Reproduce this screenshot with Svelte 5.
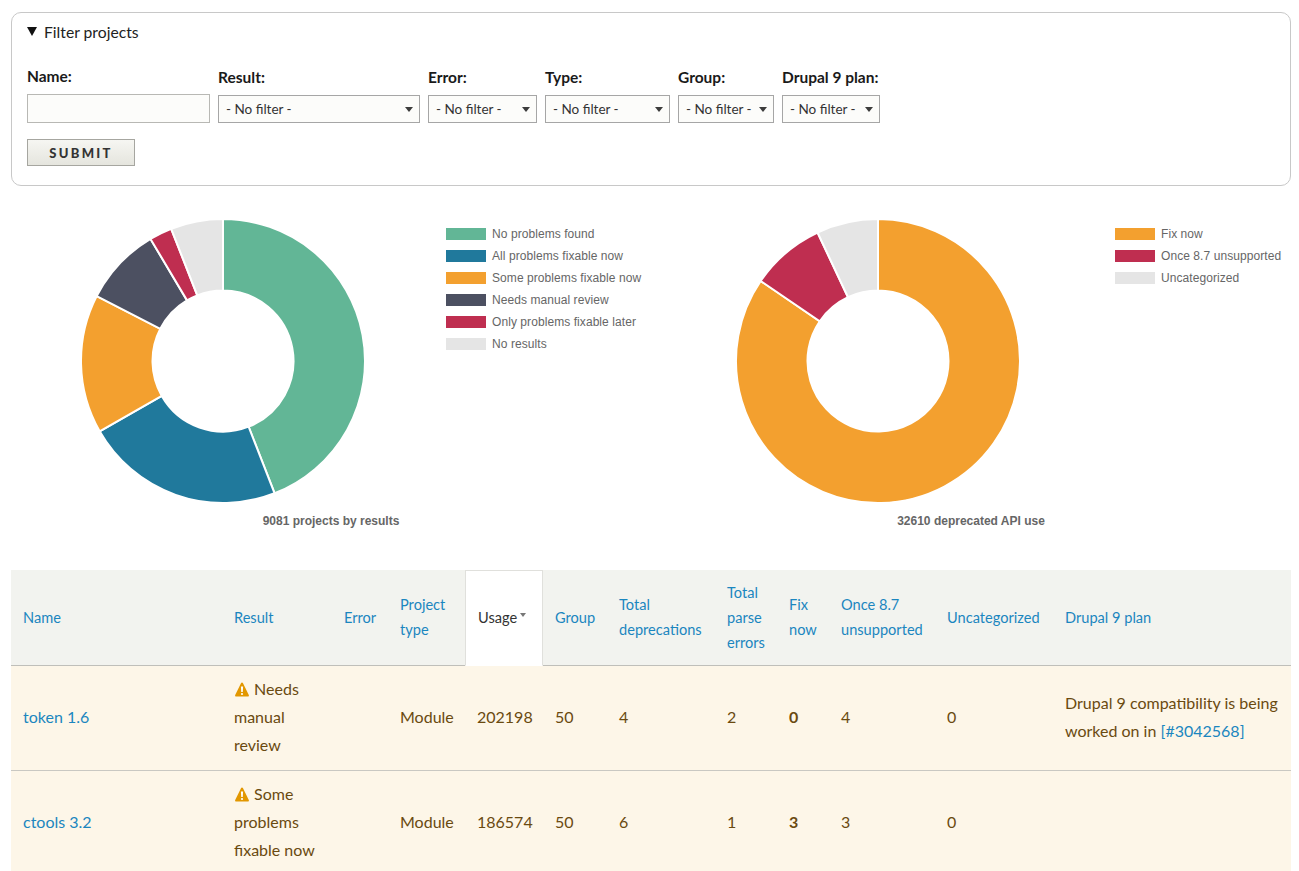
<script>
  function pt(r, deg) {
    const a = (deg * Math.PI) / 180;
    return `${(r * Math.sin(a)).toFixed(2)} ${(-r * Math.cos(a)).toFixed(2)}`;
  }
  function arc(from, to) {
    const R = 142, r = 70.5, large = to - from > 180 ? 1 : 0;
    return `M${pt(R, from)}A${R} ${R} 0 ${large} 1 ${pt(R, to)}L${pt(r, to)}A${r} ${r} 0 ${large} 0 ${pt(r, from)}Z`;
  }
  const green = '#62b696', blue = '#20799c', orange = '#f3a02f', slate = '#4c5061', red = '#bf2e50', grey = '#e5e5e5';
  const charts = [
    {
      cls: 'results',
      title: '9081 projects by results',
      segs: [
        { label: 'No problems found', color: green, end: 158.7 },
        { label: 'All problems fixable now', color: blue, end: 240.3 },
        { label: 'Some problems fixable now', color: orange, end: 297.2 },
        { label: 'Needs manual review', color: slate, end: 329.3 },
        { label: 'Only problems fixable later', color: red, end: 338.6 },
        { label: 'No results', color: grey, end: 360 }
      ]
    },
    {
      cls: 'api',
      title: '32610 deprecated API use',
      segs: [
        { label: 'Fix now', color: orange, end: 304.3 },
        { label: 'Once 8.7 unsupported', color: red, end: 334.8 },
        { label: 'Uncategorized', color: grey, end: 360 }
      ]
    }
  ];
  const filters = [
    { label: 'Result:', w: 'w202' },
    { label: 'Error:', w: 'w109' },
    { label: 'Type:', w: 'w125' },
    { label: 'Group:', w: 'w96' },
    { label: 'Drupal 9 plan:', w: 'w98' }
  ];
  const cols = [211, 110, 56, 77, 78, 64, 108, 62, 52, 106, 118, 238];
  const rows = [
    { name: 'token 1.6', result: 'Needs manual review', usage: 202198, dep: 4, parse: 2, fix: 0, once: 4, plan: true },
    { name: 'ctools 3.2', result: 'Some problems fixable now', usage: 186574, dep: 6, parse: 1, fix: 3, once: 3, plan: false }
  ];
</script>

<div class="page">
  <details class="filter" open>
    <summary><span class="tri"></span>Filter projects</summary>
    <form class="fields" onsubmit={(e) => e.preventDefault()}>
      <div class="row">
        <div class="field">
          <label for="f-name">Name:</label>
          <input id="f-name" type="text" />
        </div>
        {#each filters as f, i}
          <div class="field">
            <label for={'f-' + i}>{f.label}</label>
            <div class="selwrap {f.w}">
              <select id={'f-' + i}><option>- No filter -</option></select>
              <span class="arrow"></span>
            </div>
          </div>
        {/each}
      </div>
      <button type="submit">SUBMIT</button>
    </form>
  </details>

  <div class="charts">
    {#each charts as c}
      <figure class="chart {c.cls}">
        <div class="plot">
          <svg class="donut" width="286" height="286" viewBox="-143 -143 286 286" aria-hidden="true">
            {#each c.segs as s, i}
              <path d={arc(i ? c.segs[i - 1].end : 0, s.end)} fill={s.color} stroke="#fff" stroke-width="2" />
            {/each}
          </svg>
          <ul class="legend">
            {#each c.segs as s}
              <li><span class="swatch" style:background={s.color}></span>{s.label}</li>
            {/each}
          </ul>
        </div>
        <figcaption>{c.title}</figcaption>
      </figure>
    {/each}
  </div>

  <table>
    <colgroup>
      {#each cols as w}<col style:width="{w}px" />{/each}
    </colgroup>
    <thead>
      <tr>
        <th><a href="#name">Name</a></th>
        <th><a href="#result">Result</a></th>
        <th><a href="#error">Error</a></th>
        <th><a href="#type">Project type</a></th>
        <th class="active">Usage<span class="sort"></span></th>
        <th><a href="#group">Group</a></th>
        <th><a href="#dep">Total deprecations</a></th>
        <th><a href="#parse">Total parse errors</a></th>
        <th><a href="#fix">Fix now</a></th>
        <th><a href="#once">Once 8.7 unsupported</a></th>
        <th><a href="#uncat">Uncategorized</a></th>
        <th><a href="#plan">Drupal 9 plan</a></th>
      </tr>
    </thead>
    <tbody>
      {#each rows as r}
        <tr>
          <td><a href="#p">{r.name}</a></td>
          <td>
            <svg class="warn" width="14" height="15" viewBox="0 0 14 15" aria-hidden="true">
              <path d="M7 .4c.4 0 .7.2.9.6l5.9 12c.3.7-.1 1.5-.8 1.5H1c-.7 0-1.1-.8-.8-1.5l5.9-12c.2-.4.5-.6.9-.6z" fill="#e29700" />
              <path d="M5.9 4.6h2.2l-.35 5.4H6.25z" fill="#fff" />
              <circle cx="7" cy="12" r="1.1" fill="#fff" />
            </svg>
            {r.result}
          </td>
          <td></td>
          <td>Module</td>
          <td>{r.usage}</td>
          <td>50</td>
          <td>{r.dep}</td>
          <td>{r.parse}</td>
          <td><strong>{r.fix}</strong></td>
          <td>{r.once}</td>
          <td>0</td>
          <td>
            {#if r.plan}Drupal 9 compatibility is being worked on in <a href="#i">[#3042568]</a>{/if}
          </td>
        </tr>
      {/each}
    </tbody>
  </table>
</div>

<style>
  :global(html), :global(body) {
    margin: 0;
    background: #fff;
    overflow: hidden;
  }
  .page {
    box-sizing: border-box;
    height: 871px;
    width: 1299px;
    overflow: hidden;
    padding: 12px 8px 0 11px;
    font-family: Lato, "Open Sans", sans-serif;
    color: #222;
  }
  .filter {
    box-sizing: border-box;
    height: 174px;
    border: 1px solid #c8c8c8;
    border-radius: 10px;
    padding: 0 15px;
  }
  summary {
    list-style: none;
    display: flex;
    align-items: center;
    gap: 7px;
    height: 37px;
    font-size: 15.7px;
    color: #222;
  }
  summary::-webkit-details-marker {
    display: none;
  }
  .tri {
    width: 0;
    height: 0;
    border-left: 5px solid transparent;
    border-right: 5px solid transparent;
    border-top: 9px solid #111;
  }
  .fields {
    padding-top: 17px;
  }
  .row {
    display: flex;
    gap: 8px;
    align-items: flex-end;
  }
  .field {
    display: flex;
    flex-direction: column;
  }
  label {
    font-size: 15.5px;
    font-weight: 700;
    color: #1a1a1a;
    line-height: 18px;
    margin-bottom: 9px;
  }
  input {
    box-sizing: border-box;
    width: 183px;
    height: 29px;
    border: 1px solid #b8b8b4;
    background: #fcfcfa;
    padding: 0 8px;
    border-radius: 0;
    outline: none;
  }
  .selwrap {
    position: relative;
    height: 28px;
  }
  .w202 { width: 202px; }
  .w109 { width: 109px; }
  .w125 { width: 125px; }
  .w96 { width: 96px; }
  .w98 { width: 98px; }
  select {
    appearance: none;
    box-sizing: border-box;
    width: 100%;
    height: 100%;
    border: 1px solid #a6a6a6;
    border-radius: 0;
    background: #fcfcfa;
    padding: 0 0 0 7px;
    font: 13.5px Lato, "Open Sans", sans-serif;
    color: #333;
  }
  .arrow {
    position: absolute;
    right: 7px;
    top: 12px;
    width: 0;
    height: 0;
    border-left: 4.5px solid transparent;
    border-right: 4.5px solid transparent;
    border-top: 5.5px solid #3c3c3c;
    pointer-events: none;
  }
  button {
    display: block;
    box-sizing: border-box;
    width: 108px;
    height: 27px;
    margin-top: 16px;
    border: 1px solid #a6a6a0;
    border-radius: 0;
    background: linear-gradient(#f6f6f2, #e5e5de);
    font: 900 13px Lato, "Open Sans", sans-serif;
    letter-spacing: 2.3px;
    color: #333;
    padding: 0;
  }
  .charts {
    display: flex;
    margin-top: 31.5px;
    height: 352.5px;
  }
  .chart {
    width: 640px;
    margin: 0;
  }
  .plot {
    display: flex;
    align-items: flex-start;
  }
  .donut {
    display: block;
    flex: none;
  }
  .results .donut { margin-left: 69px; }
  .results .legend { margin-left: 80px; }
  .api .donut { margin-left: 83.5px; }
  .api .legend { margin-left: 94.5px; }
  .legend {
    list-style: none;
    margin: 5px 0 0;
    padding: 0;
    font: 12px "Liberation Sans", Arial, sans-serif;
    letter-spacing: 0.07px;
    color: #666;
  }
  .legend li {
    display: flex;
    align-items: center;
    gap: 6px;
    height: 22px;
    white-space: nowrap;
  }
  .swatch {
    width: 40px;
    height: 12px;
    flex: none;
  }
  figcaption {
    text-align: center;
    font: 700 12px/14px "Liberation Sans", Arial, sans-serif;
    color: #666;
    margin-top: 10.5px;
  }
  table {
    width: 1280px;
    table-layout: fixed;
    border-collapse: separate;
    border-spacing: 0;
  }
  th {
    background: #f2f3ef;
    font-weight: 400;
    font-size: 14.6px;
    line-height: 25px;
    text-align: left;
    padding: 9.5px 12px 10.5px;
    border-bottom: 1px solid #bfbfba;
    color: #333;
  }
  th.active {
    background: #fff;
    border: 1px solid #e0e0dc;
    border-bottom-color: #fff;
    white-space: nowrap;
  }
  .sort {
    display: inline-block;
    width: 0;
    height: 0;
    margin: 0 0 8px 3px;
    vertical-align: middle;
    border-left: 3.5px solid transparent;
    border-right: 3.5px solid transparent;
    border-top: 4px solid #777;
  }
  td {
    background: #fdf6e8;
    color: #6a4a10;
    font-size: 16px;
    line-height: 28px;
    padding: 9px 12px 11px;
    border-bottom: 1px solid #c9c8c2;
  }
  a {
    color: #1b86bf;
    text-decoration: none;
  }
  .warn {
    vertical-align: -2px;
    margin: 0 1px;
  }
  strong {
    font-weight: 700;
  }
</style>
